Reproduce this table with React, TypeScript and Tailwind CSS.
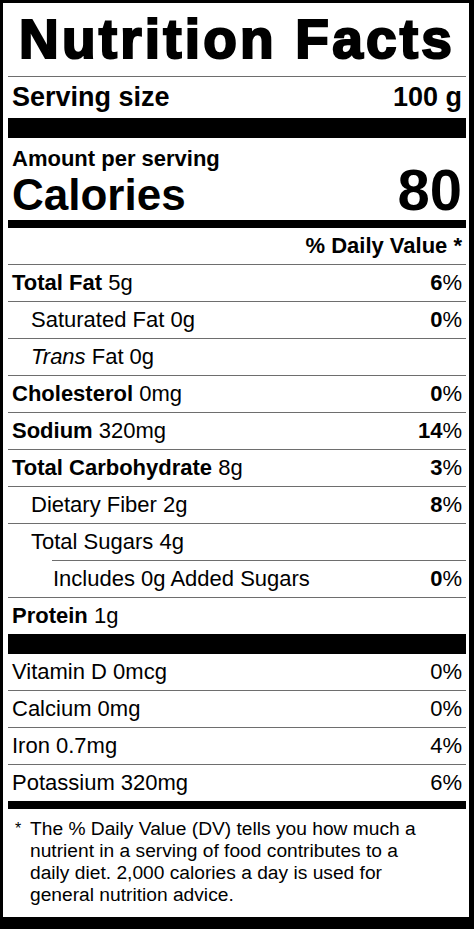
import React from "react";

const Line = ({ indent = 0 }: { indent?: number }) => (
  <div className={indent === 2 ? "h-px bg-[#6e6e6e] ml-[44px]" : "h-px bg-[#6e6e6e]"} />
);

type RowProps = {
  children: React.ReactNode;
  right?: React.ReactNode;
  indent?: 0 | 1 | 2;
};

const Row = ({ children, right, indent = 0 }: RowProps) => {
  const pad = indent === 0 ? "pl-[4px]" : indent === 1 ? "pl-[23px]" : "pl-[45px]";
  return (
    <div className={`flex h-[36px] items-center justify-between pr-[4px] text-[22px] leading-[36px] ${pad}`}>
      <span className="whitespace-nowrap">{children}</span>
      {right !== undefined && <span className="whitespace-nowrap">{right}</span>}
    </div>
  );
};

export default function App() {
  return (
    <div
      className="h-[929px] w-[474px] overflow-hidden border-b-[12px] border-l-[3px] border-r-[5px] border-t-[3px] border-black bg-white text-black"
      style={{ fontFamily: '"Liberation Sans", Arial, sans-serif' }}
    >
      <div className="pl-[5px] pr-[3px]">
        {/* Title */}
        <div className="h-[73px] whitespace-nowrap text-center text-[55px] font-bold leading-[73px] tracking-[3.2px] [-webkit-text-stroke:2.2px_black]">
          Nutrition Facts
        </div>
        <Line />
        <div className="flex h-[41px] items-center justify-between px-[4px] text-[27px] font-bold leading-[41px]">
          <span>Serving size</span>
          <span>100 g</span>
        </div>
        <div className="h-[20px] bg-black" />

        {/* Calories */}
        <div className="px-[4px] pb-[3px] pt-[6px]">
          <div className="text-[22px] font-bold leading-[29px]">Amount per serving</div>
          <div className="flex h-[44px] items-baseline justify-between font-bold">
            <span className="text-[44px] leading-[44px]">Calories</span>
            <span className="text-[58px] leading-[34px]">80</span>
          </div>
        </div>
        <div className="h-[8px] bg-black" />

        <div className="flex h-[36px] items-center justify-end pr-[4px] text-[22px] font-bold leading-[36px]">
          % Daily Value *
        </div>
        <Line />
        <Row right={<><b>6</b>%</>}>
          <b>Total Fat</b> 5g
        </Row>
        <Line />
        <Row indent={1} right={<><b>0</b>%</>}>
          Saturated Fat 0g
        </Row>
        <Line />
        <Row indent={1}>
          <i>Trans</i> Fat 0g
        </Row>
        <Line />
        <Row right={<><b>0</b>%</>}>
          <b>Cholesterol</b> 0mg
        </Row>
        <Line />
        <Row right={<><b>14</b>%</>}>
          <b>Sodium</b> 320mg
        </Row>
        <Line />
        <Row right={<><b>3</b>%</>}>
          <b>Total Carbohydrate</b> 8g
        </Row>
        <Line />
        <Row indent={1} right={<><b>8</b>%</>}>
          Dietary Fiber 2g
        </Row>
        <Line />
        <Row indent={1}>Total Sugars 4g</Row>
        <Line indent={2} />
        <Row indent={2} right={<><b>0</b>%</>}>
          Includes 0g Added Sugars
        </Row>
        <Line />
        <Row>
          <b>Protein</b> 1g
        </Row>
        <div className="h-[20px] bg-black" />

        <Row right="0%">Vitamin D 0mcg</Row>
        <Line />
        <Row right="0%">Calcium 0mg</Row>
        <Line />
        <Row right="4%">Iron 0.7mg</Row>
        <Line />
        <Row right="6%">Potassium 320mg</Row>
        <div className="h-[8px] bg-black" />

        {/* Footnote */}
        <div className="flex pt-[9px] text-[19.2px] leading-[22px]">
          <span className="w-[22px] shrink-0 pl-[7px] text-[16px]">*</span>
          <span className="w-[404px]">
            The % Daily Value (DV) tells you how much a nutrient in a serving of food contributes to a daily diet. 2,000
            calories a day is used for general nutrition advice.
          </span>
        </div>
      </div>
    </div>
  );
}
